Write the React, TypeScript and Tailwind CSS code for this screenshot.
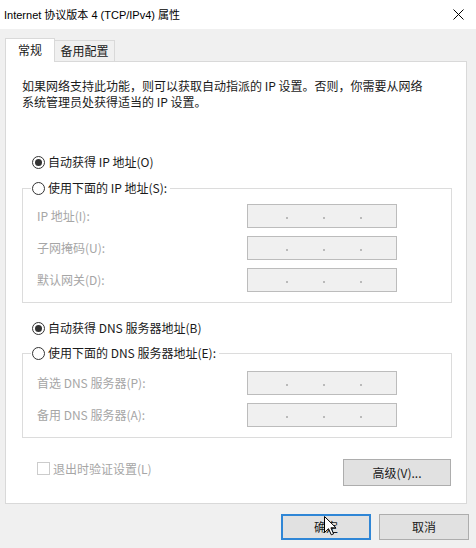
import React from 'react'

function Radio({ checked, label }: { checked?: boolean; label: string }) {
  return (
    <div className="flex h-[20px] items-center gap-[3px]">
      <span className="flex h-[13px] w-[13px] items-center justify-center rounded-full border border-[#333333] bg-white">
        {checked && <span className="h-[7px] w-[7px] rounded-full bg-[#333333]" />}
      </span>
      <span className="leading-[20px] text-[#1a1a1a]">{label}</span>
    </div>
  )
}

function IpBox() {
  return (
    <div className="flex h-[24px] w-[150px] items-center justify-center gap-[35px] border border-[#bcbcbc] bg-[#f0f0f0] pl-[4px]">
      <span className="mt-[3px] h-[2px] w-[2px] rounded-full bg-[#a8a8a8]" />
      <span className="mt-[3px] h-[2px] w-[2px] rounded-full bg-[#a8a8a8]" />
      <span className="mt-[3px] h-[2px] w-[2px] rounded-full bg-[#a8a8a8]" />
    </div>
  )
}

function FieldRow({ label }: { label: string }) {
  return (
    <div className="flex items-center">
      <span className="w-[216px] pl-[6px] leading-[24px] text-[#a6a6a6]">{label}</span>
      <IpBox />
    </div>
  )
}

function Group({ legend, labels, top, bottom }: { legend: string; labels: string[]; top: string; bottom: string }) {
  return (
    <fieldset className={`ml-[16px] w-[430px] border border-[#dcdcdc] pl-[8px] ${bottom}`}>
      <legend className="pl-[1px] pr-[3px]">
        <Radio label={legend} />
      </legend>
      <div className={`flex flex-col gap-[8px] ${top}`}>
        {labels.map((l) => (
          <FieldRow key={l} label={l} />
        ))}
      </div>
    </fieldset>
  )
}

export default function App() {
  return (
    <div className="relative flex h-[548px] w-[476px] flex-col overflow-hidden bg-[#f0f0f0] font-['Noto_Sans_CJK_SC',sans-serif] text-[12px] text-[#1a1a1a]">
      {/* title bar */}
      <div className="flex h-[29px] shrink-0 items-center justify-between bg-white pl-[4px] pr-[12px]">
        <span className="font-['Liberation_Sans','Noto_Sans_CJK_SC',sans-serif] text-[11px] leading-[16px] text-black">
          Internet 协议版本 4 (TCP/IPv4) 属性
        </span>
        <svg width="11" height="11" viewBox="0 0 11 11" className="text-black">
          <path d="M0.5 0.5L10.5 10.5M10.5 0.5L0.5 10.5" stroke="currentColor" strokeWidth="1" />
        </svg>
      </div>

      {/* tabs */}
      <div className="mt-[9px] flex items-start pl-[5px]">
        <div className="relative z-10 flex h-[24px] w-[50px] items-center justify-center border border-b-0 border-[#d9d9d9] bg-white pb-[2px] leading-[16px]">
          常规
        </div>
        <div className="mt-[2px] flex h-[21px] w-[60px] items-center justify-center border border-b-0 border-l-0 border-[#d9d9d9] bg-[#f0f0f0] leading-[16px]">
          备用配置
        </div>
      </div>

      {/* panel */}
      <div className="-mt-px ml-[5px] h-[443px] w-[462px] border border-[#d9d9d9] bg-white">
        <p className="whitespace-nowrap pl-[16px] pt-[16px] leading-[16px]">
          如果网络支持此功能，则可以获取自动指派的 IP 设置。否则，你需要从网络
          <br />
          系统管理员处获得适当的 IP 设置。
        </p>

        <div className="ml-[26px] mt-[42px]">
          <Radio checked label="自动获得 IP 地址(O)" />
        </div>
        <div className="mt-[6px]">
          <Group
            legend="使用下面的 IP 地址(S):"
            labels={['IP 地址(I):', '子网掩码(U):', '默认网关(D):']}
            top="mt-[6px]"
            bottom="pb-[10px]"
          />
        </div>

        <div className="ml-[26px] mt-[15px]">
          <Radio checked label="自动获得 DNS 服务器地址(B)" />
        </div>
        <div className="mt-[5px]">
          <Group
            legend="使用下面的 DNS 服务器地址(E):"
            labels={['首选 DNS 服务器(P):', '备用 DNS 服务器(A):']}
            top="mt-[8px]"
            bottom="pb-[10px]"
          />
        </div>

        <div className="ml-[31px] mt-[21px] flex w-[414px] items-start justify-between">
          <div className="mt-[3px] flex items-center gap-[3px]">
            <span className="h-[13px] w-[13px] border border-[#cccccc] bg-white" />
            <span className="leading-[13px] text-[#a6a6a6]">退出时验证设置(L)</span>
          </div>
          <button className="h-[27px] w-[108px] border border-[#adadad] bg-[#e1e1e1] leading-[16px] text-[#1a1a1a]">
            高级(V)...
          </button>
        </div>
      </div>

      {/* dialog buttons */}
      <div className="mt-[10px] flex justify-end gap-[8px] pr-[7px]">
        <button className="h-[26px] w-[90px] border-2 border-[#2f86d6] bg-[#e1e1e1] leading-[16px] text-[#1a1a1a]">
          确定
        </button>
        <button className="h-[26px] w-[90px] border border-[#adadad] bg-[#e1e1e1] leading-[16px] text-[#1a1a1a]">
          取消
        </button>
      </div>

      {/* mouse pointer */}
      <svg className="absolute left-[324px] top-[516px]" width="13" height="20" viewBox="0 0 13 20">
        <path
          d="M0.5 0.5L0.5 16.5L4.5 12.7L7.3 18.8L9.6 17.8L6.9 11.8L12 11.8Z"
          fill="white"
          stroke="black"
          strokeWidth="1"
          strokeLinejoin="round"
        />
      </svg>
    </div>
  )
}
